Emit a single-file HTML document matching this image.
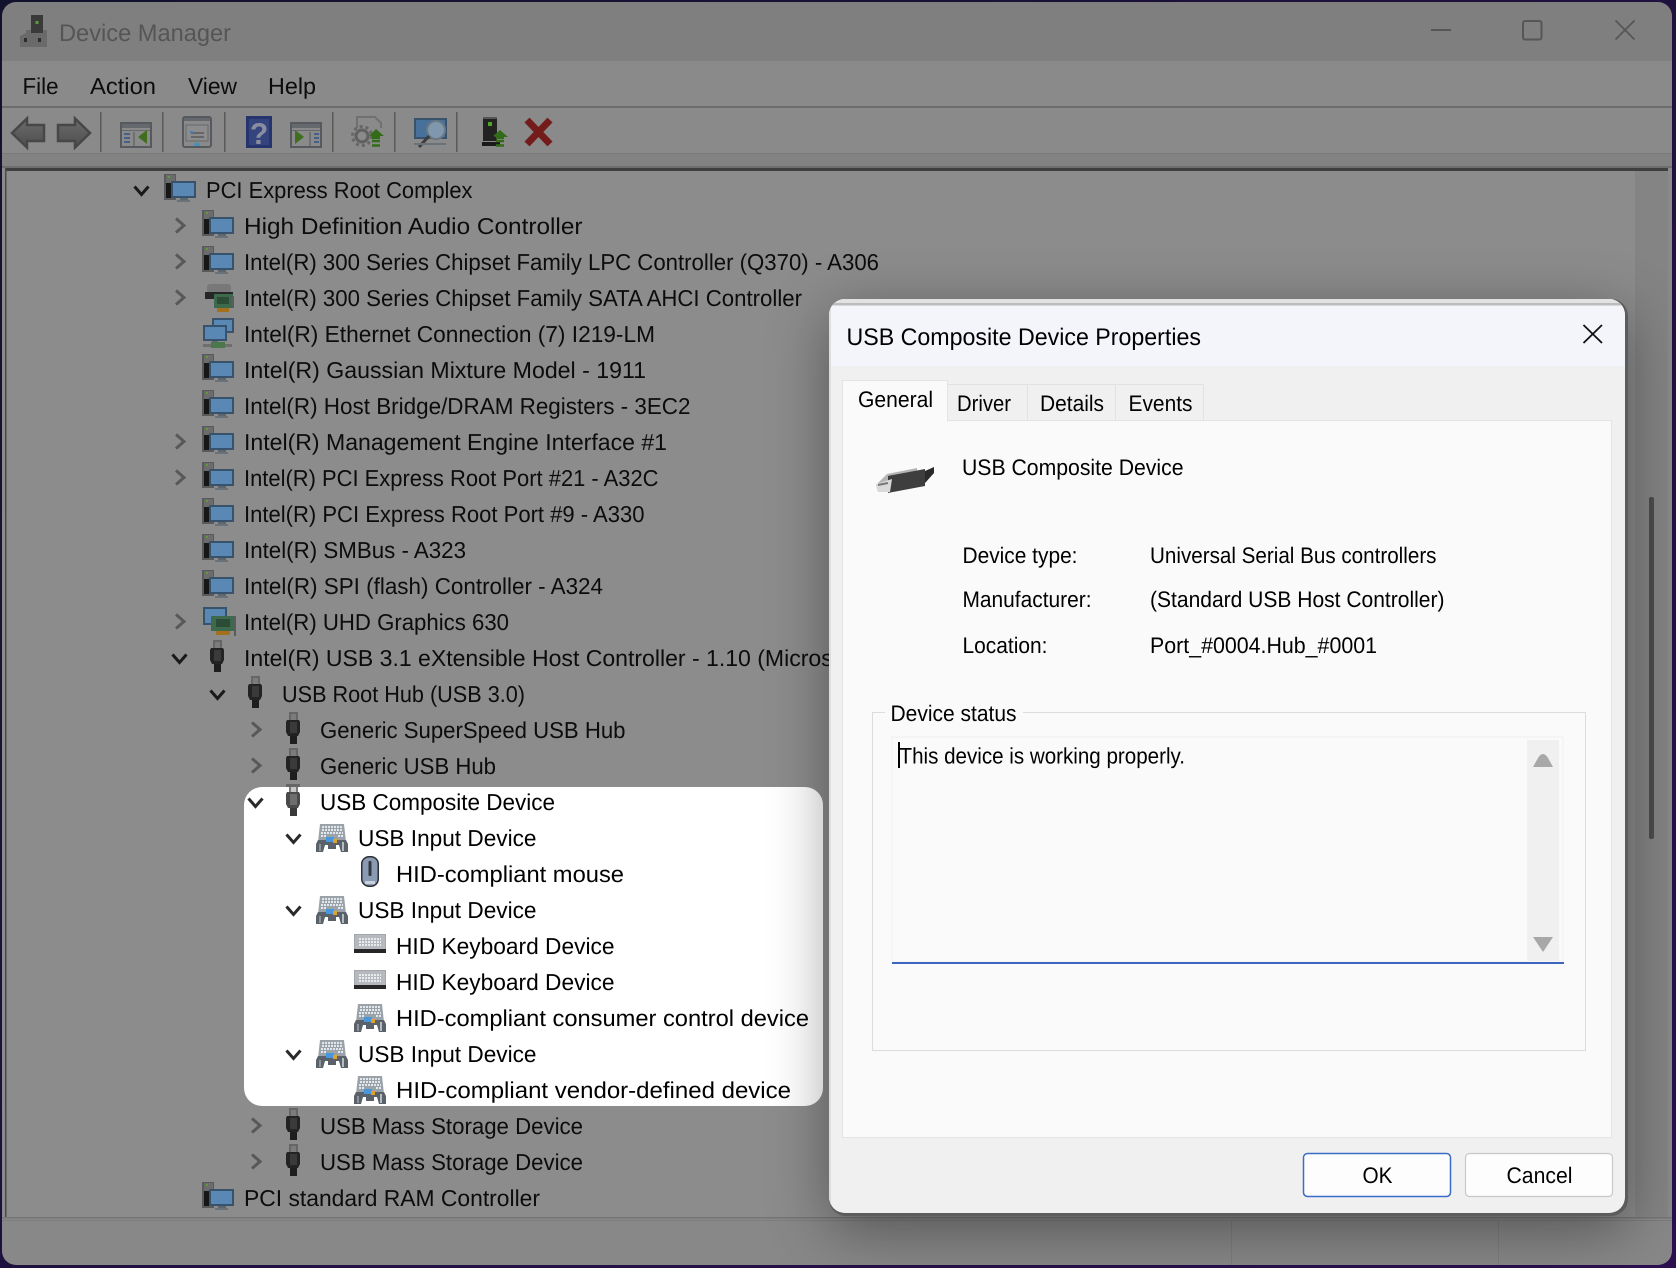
<!DOCTYPE html>
<html lang="en"><head><meta charset="utf-8"><title>Device Manager</title>
<style>
html,body{margin:0;padding:0;width:1676px;height:1268px;overflow:hidden;background:#141430}
svg{display:block}
text{font-family:"Liberation Sans",sans-serif;white-space:pre;text-rendering:geometricPrecision}
.t{font-size:23px;fill:#0c0c0c}
.k{font-size:23px;fill:#000}
.d{font-size:22.5px;fill:#000}
</style></head><body>
<svg xmlns="http://www.w3.org/2000/svg" width="1676" height="1268" viewBox="0 0 1676 1268">
<defs>
<linearGradient id="pg" x1="0" y1="0" x2="1" y2="1"><stop offset="0" stop-color="#12122c"/><stop offset="1" stop-color="#2c1050"/></linearGradient>
<linearGradient id="arr" x1="0" y1="0" x2="0" y2="1"><stop offset="0" stop-color="#6c6c6c"/><stop offset="1" stop-color="#4e4e4e"/></linearGradient>
<clipPath id="win"><rect x="2" y="2" width="1670" height="1263" rx="14"/></clipPath>
<clipPath id="dlg"><rect x="829" y="299" width="796" height="914" rx="16"/></clipPath>

<g id="pc">
<rect x="0" y="0" width="12" height="26" fill="#5a5a5a"/>
<rect x="2" y="1" width="9" height="8" fill="#6c6c6c"/>
<rect x="2" y="9" width="7" height="15" fill="#171717"/>
<rect x="4" y="2" width="2" height="2" fill="#5c9a3c"/>
<rect x="7" y="7" width="25" height="17" fill="#38526c"/>
<rect x="9" y="9" width="21" height="13" fill="#5a88b4"/>
<rect x="16" y="24" width="8" height="2" fill="#5a6670"/>
<rect x="13" y="26" width="13" height="2" fill="#6a7278"/>
</g>
<g id="sata">
<rect x="3" y="0" width="24" height="9" rx="3" fill="#787878"/>
<rect x="1" y="8" width="28" height="7" fill="#262626"/>
<rect x="10" y="10" width="19" height="14" fill="#3d6a4c"/>
<rect x="13" y="13" width="12" height="7" fill="#2c4c38"/>
<rect x="13" y="24" width="12" height="4" fill="#a5701e"/>
<rect x="28" y="12" width="2" height="12" fill="#5c5c5c"/>
</g>
<g id="net">
<rect x="9" y="0" width="22" height="15" fill="#38526c"/><rect x="11" y="2" width="18" height="11" fill="#5a88b4"/>
<rect x="0" y="7" width="24" height="16" fill="#38526c"/><rect x="2" y="9" width="20" height="12" fill="#5a88b4"/>
<rect x="9" y="23" width="6" height="3" fill="#5a6670"/>
<rect x="0" y="26" width="29" height="3" fill="#6e6e6e"/>
<rect x="8" y="24" width="14" height="6" fill="#4a784a"/>
</g>
<g id="gfx">
<rect x="0" y="0" width="24" height="18" fill="#38526c"/><rect x="2" y="2" width="20" height="14" fill="#5a88b4"/>
<rect x="8" y="9" width="25" height="15" fill="#3d6a4c"/><rect x="13" y="12" width="14" height="8" fill="#2c4c38"/>
<rect x="13" y="24" width="14" height="4" fill="#a5701e"/>
<rect x="31" y="9" width="2" height="20" fill="#5c5c5c"/>
</g>
<g id="usb">
<rect x="3" y="0" width="9" height="11" fill="#666"/><rect x="5" y="2" width="5" height="7" fill="#7c7c7c"/>
<path d="M1 8H13L14 10V20L12 24H2L0 20V10Z" fill="#232323"/>
<rect x="4" y="10" width="7" height="11" fill="#3a3a3a"/>
<rect x="4" y="24" width="7" height="8" fill="#1e1e1e"/>
</g>
<g id="usbl">
<rect x="3" y="0" width="9" height="11" fill="#7a7a7a"/><rect x="5" y="2" width="5" height="7" fill="#c8c8c8"/>
<path d="M1 8H13L14 10V20L12 24H2L0 20V10Z" fill="#4a4a4a"/>
<rect x="4" y="10" width="7" height="11" fill="#6e6e6e"/>
<rect x="4" y="24" width="7" height="8" fill="#3a3a3a"/>
</g>
<g id="inp">
<path d="M4 0H28L30 18H2Z" fill="#9aa2aa"/>
<path d="M6 3H26M6 6H27M5 9H27M5 12H10M22 12H27" stroke="#e4e8ec" stroke-width="2" stroke-dasharray="2 1" fill="none"/>
<path d="M2 16H30L32 20V28H25L23 21H20V25H12V21H9L7 28H0V20Z" fill="#5b6168"/>
<rect x="10" y="13" width="8" height="5" fill="#4a96dc"/>
<rect x="17" y="15" width="4" height="4" fill="#e0a030"/>
<rect x="26" y="18" width="2" height="9" fill="#b4bcc4"/>
<rect x="3" y="20" width="2" height="7" fill="#8d959c"/>
</g>
<g id="kb">
<rect x="0" y="0" width="32" height="17" fill="#a3a7ab"/>
<rect x="1" y="1" width="30" height="15" fill="#b6babe"/>
<path d="M5 5H27M5 8H27M5 11H27" stroke="#e8eaec" stroke-width="2" stroke-dasharray="2 1" fill="none"/>
<rect x="0" y="15" width="32" height="4" fill="#262626"/>
</g>
<g id="mouse">
<rect x="1" y="0" width="18" height="31" rx="8" fill="#2a2d33"/>
<rect x="2.500" y="1.500" width="15" height="28" rx="6.500" fill="#8a9ab3"/>
<rect x="8.500" y="5" width="3" height="15" rx="1" fill="#33383f"/>
<rect x="5" y="25" width="10" height="3" fill="#c8d0dc"/>
</g>
<path id="cc" d="M-4 -7L4 0L-4 7" fill="none" stroke="#585858" stroke-width="3"/>
<path id="ce" d="M-7 -4L0 4L7 -4" fill="none" stroke="#191919" stroke-width="3"/>
<path id="cel" d="M-7 -4L0 4L7 -4" fill="none" stroke="#2a2a2a" stroke-width="3"/>
<g id="pane">
<rect x="1" y="1" width="30" height="24" fill="#8a8a8a" stroke="#56595e" stroke-width="2"/>
<rect x="2" y="2" width="28" height="4" fill="#65686c"/>
<rect x="2" y="8" width="28" height="1" fill="#65686c"/>
</g>
</defs>

<rect width="1676" height="1268" fill="url(#pg)"/>
<g clip-path="url(#win)">
<rect x="0" y="0" width="1676" height="62" fill="#7f7f7f"/>
<rect x="0" y="61" width="1676" height="46" fill="#8a8a8a"/>
<rect x="0" y="106" width="1676" height="2" fill="#6d6d6d"/>
<rect x="0" y="108" width="1676" height="45" fill="#8a8a8a"/>
<rect x="0" y="153" width="1676" height="14" fill="#828282"/>
<rect x="0" y="153" width="1676" height="1" fill="#797979"/>
<rect x="0" y="166" width="1676" height="2" fill="#6e6e6e"/>
<rect x="0" y="168" width="1676" height="1060" fill="#8a8a8a"/>
<rect x="5" y="168" width="1663" height="3" fill="#3e3e3e"/>
<rect x="5" y="168" width="1.500" height="1049" fill="#4a4a4a"/>
<rect x="6.500" y="171" width="1661.500" height="1046" fill="#8c8c8c"/>
<rect x="1635" y="171" width="33" height="1046" fill="#848484"/>
<rect x="1649" y="497" width="5" height="342" rx="2" fill="#4c4c4c"/>
<rect x="0" y="1217" width="1676" height="1.500" fill="#757575"/>
<rect x="0" y="1220" width="1676" height="1" fill="#7b7b7b"/>
<rect x="0" y="1221" width="1676" height="45" fill="#888"/>
<rect x="1231" y="1221" width="1" height="45" fill="#7d7d7d"/>
<rect x="1498" y="1221" width="1" height="45" fill="#7d7d7d"/>
</g>

<!-- title bar -->
<rect x="31" y="15" width="12" height="19" fill="#3a3a3a"/><rect x="35.500" y="21" width="3" height="3" fill="#5c9a3c"/>
<path d="M26 30H31V33H43V30H47V47H20V36L26 33Z" fill="#6a6a6a"/><rect x="24" y="38" width="3" height="4" fill="#2c2c2c"/><rect x="38" y="38" width="3" height="4" fill="#2c2c2c"/>
<text x="59" y="41" font-size="24" fill="#555" textLength="172" lengthAdjust="spacingAndGlyphs">Device Manager</text>
<path d="M1431 30H1451" stroke="#565656" stroke-width="2"/>
<rect x="1523" y="21" width="18.500" height="18.500" rx="2" fill="none" stroke="#565656" stroke-width="2"/>
<path d="M1615.500 20.500L1634.500 39.500M1634.500 20.500L1615.500 39.500" stroke="#565656" stroke-width="1.800"/>

<!-- menu -->
<text class="t" x="22.500" y="94" textLength="36" lengthAdjust="spacingAndGlyphs">File</text>
<text class="t" x="90" y="94" textLength="66" lengthAdjust="spacingAndGlyphs">Action</text>
<text class="t" x="188" y="94" textLength="49" lengthAdjust="spacingAndGlyphs">View</text>
<text class="t" x="268" y="94" textLength="48" lengthAdjust="spacingAndGlyphs">Help</text>

<!-- toolbar -->
<path d="M12 133L27 118.500V125H44V141H27V147.500Z" fill="url(#arr)" stroke="#474747" stroke-width="2.500"/>
<path d="M90 133L75 118.500V125H58V141H75V147.500Z" fill="url(#arr)" stroke="#474747" stroke-width="2.500"/>
<g fill="#5a5a5a"><rect x="100" y="112" width="1.500" height="40"/><rect x="162" y="112" width="1.500" height="40"/><rect x="224" y="112" width="1.500" height="40"/><rect x="332" y="112" width="1.500" height="40"/><rect x="394" y="112" width="1.500" height="40"/><rect x="456" y="112" width="1.500" height="40"/></g>
<use href="#pane" x="120" y="122"/>
<path d="M134 132V146" stroke="#65686c" stroke-width="1.500"/>
<path d="M124 134H130M124 138H130M124 142H130" stroke="#465f88" stroke-width="2"/>
<path d="M147 130V144L138 137Z" fill="#3f6f1e"/>
<rect x="183" y="117" width="28" height="30" rx="2" fill="#8a8a8a" stroke="#56595e" stroke-width="2"/>
<rect x="184" y="118" width="26" height="3" fill="#65686c"/>
<rect x="186" y="125" width="22" height="16" fill="#8c8c8c" stroke="#65686c"/>
<path d="M191 133H204M191 137H204" stroke="#565a5f" stroke-width="1.500"/><rect x="190" y="131" width="3" height="2" fill="#4a7fb0"/>
<rect x="194" y="143" width="6" height="3" fill="#4a8fb8"/>
<rect x="246" y="116" width="26" height="32" fill="#26336c"/>
<rect x="249" y="119" width="20" height="26" fill="#34447f"/>
<text x="259" y="144" font-size="30" font-weight="bold" fill="#8a8e9e" text-anchor="middle">?</text>
<use href="#pane" x="290" y="122"/>
<path d="M310 132V146" stroke="#65686c" stroke-width="1.500"/>
<path d="M314 134H319M314 138H319M314 142H319" stroke="#465f88" stroke-width="2"/>
<path d="M295 130V144L304 137Z" fill="#3f6f1e"/>
<path d="M357 128V117H375L381 123V128" fill="none" stroke="#707070" stroke-width="2"/>
<circle cx="362" cy="136" r="6" fill="none" stroke="#606060" stroke-width="3"/><circle cx="362" cy="136" r="9.500" fill="none" stroke="#666" stroke-width="3" stroke-dasharray="3 3"/>
<path d="M369 136L376 129L384 136H380V139H372V136Z" fill="#336c18"/><path d="M372 141H380M372 145.500H380" stroke="#336c18" stroke-width="2.500"/>
<rect x="415" y="119" width="31" height="19" fill="#47719a" stroke="#38526c" stroke-width="2"/>
<circle cx="436" cy="130" r="9" fill="#8098ae" stroke="#6a7884" stroke-width="2"/>
<path d="M429 136L419 147" stroke="#3c3c3c" stroke-width="3"/>
<rect x="414" y="143" width="32" height="2" fill="#6a7278"/>
<rect x="483" y="117" width="14" height="24" fill="#222"/><rect x="483" y="117" width="14" height="2" fill="#555"/>
<rect x="488" y="122" width="4" height="4" fill="#55a028"/><rect x="482" y="142" width="18" height="4" fill="#1a1a1a"/>
<path d="M493 136L500 130L508 137H504V139H496V137Z" fill="#336c18"/><path d="M496 141H504M496 145.500H504" stroke="#336c18" stroke-width="2.500"/>
<path d="M527 120L550 144M550 120L527 144" stroke="#741c1c" stroke-width="7"/>

<!-- tree: highlight -->
<rect x="244" y="787" width="579" height="319" rx="18" fill="#fff"/>

<!-- chevrons -->
<use href="#ce" x="141.500" y="190.500"/>
<use href="#cc" x="180" y="225.500"/><use href="#cc" x="180" y="261.500"/><use href="#cc" x="180" y="297.500"/>
<use href="#cc" x="180" y="441.500"/><use href="#cc" x="180" y="477.500"/><use href="#cc" x="180" y="621.500"/>
<use href="#ce" x="179.500" y="658.500"/><use href="#ce" x="217.500" y="694.500"/>
<use href="#cc" x="256" y="729.500"/><use href="#cc" x="256" y="765.500"/>
<use href="#cel" x="255.500" y="802.500"/><use href="#cel" x="293.500" y="838.500"/><use href="#cel" x="293.500" y="910.500"/><use href="#cel" x="293.500" y="1054.500"/>
<use href="#cc" x="256" y="1125.500"/><use href="#cc" x="256" y="1161.500"/>

<!-- icons -->
<use href="#pc" x="164" y="174"/><use href="#pc" x="202" y="210"/><use href="#pc" x="202" y="246"/>
<use href="#sata" x="204" y="284"/><use href="#net" x="203" y="318"/>
<use href="#pc" x="202" y="354"/><use href="#pc" x="202" y="390"/><use href="#pc" x="202" y="426"/><use href="#pc" x="202" y="462"/><use href="#pc" x="202" y="498"/><use href="#pc" x="202" y="534"/><use href="#pc" x="202" y="570"/>
<use href="#gfx" x="203" y="607"/>
<use href="#usb" x="210" y="640"/><use href="#usb" x="248" y="676"/><use href="#usb" x="286" y="712"/><use href="#usb" x="286" y="748"/>
<use href="#usbl" x="286" y="784"/>
<rect x="286" y="784" width="14" height="3" fill="#666"/>
<use href="#inp" x="316" y="824"/><use href="#mouse" x="360" y="856"/><use href="#inp" x="316" y="896"/>
<use href="#kb" x="354" y="934"/><use href="#kb" x="354" y="970"/><use href="#inp" x="354" y="1004"/><use href="#inp" x="316" y="1040"/><use href="#inp" x="354" y="1076"/>
<use href="#usb" x="286" y="1108"/><use href="#usb" x="286" y="1144"/><use href="#pc" x="202" y="1182"/>

<!-- tree text -->
<text class="t" x="206" y="197.800" textLength="266.500" lengthAdjust="spacingAndGlyphs">PCI Express Root Complex</text>
<text class="t" x="244" y="233.800" textLength="338.500" lengthAdjust="spacingAndGlyphs">High Definition Audio Controller</text>
<text class="t" x="244" y="269.800" textLength="635" lengthAdjust="spacingAndGlyphs">Intel(R) 300 Series Chipset Family LPC Controller (Q370) - A306</text>
<text class="t" x="244" y="305.800" textLength="558" lengthAdjust="spacingAndGlyphs">Intel(R) 300 Series Chipset Family SATA AHCI Controller</text>
<text class="t" x="244" y="341.800" textLength="411" lengthAdjust="spacingAndGlyphs">Intel(R) Ethernet Connection (7) I219-LM</text>
<text class="t" x="244" y="377.800" textLength="402" lengthAdjust="spacingAndGlyphs">Intel(R) Gaussian Mixture Model - 1911</text>
<text class="t" x="244" y="413.800" textLength="446.500" lengthAdjust="spacingAndGlyphs">Intel(R) Host Bridge/DRAM Registers - 3EC2</text>
<text class="t" x="244" y="449.800" textLength="423" lengthAdjust="spacingAndGlyphs">Intel(R) Management Engine Interface #1</text>
<text class="t" x="244" y="485.800" textLength="414.500" lengthAdjust="spacingAndGlyphs">Intel(R) PCI Express Root Port #21 - A32C</text>
<text class="t" x="244" y="521.800" textLength="400.500" lengthAdjust="spacingAndGlyphs">Intel(R) PCI Express Root Port #9 - A330</text>
<text class="t" x="244" y="557.800" textLength="222" lengthAdjust="spacingAndGlyphs">Intel(R) SMBus - A323</text>
<text class="t" x="244" y="593.800" textLength="359" lengthAdjust="spacingAndGlyphs">Intel(R) SPI (flash) Controller - A324</text>
<text class="t" x="244" y="629.800" textLength="265" lengthAdjust="spacingAndGlyphs">Intel(R) UHD Graphics 630</text>
<text class="t" x="244" y="665.800" textLength="622" lengthAdjust="spacingAndGlyphs">Intel(R) USB 3.1 eXtensible Host Controller - 1.10 (Microsoft)</text>
<text class="t" x="282" y="701.800" textLength="243" lengthAdjust="spacingAndGlyphs">USB Root Hub (USB 3.0)</text>
<text class="t" x="320" y="737.800" textLength="305.500" lengthAdjust="spacingAndGlyphs">Generic SuperSpeed USB Hub</text>
<text class="t" x="320" y="773.800" textLength="176" lengthAdjust="spacingAndGlyphs">Generic USB Hub</text>
<text class="k" x="320" y="809.800" textLength="235" lengthAdjust="spacingAndGlyphs">USB Composite Device</text>
<text class="k" x="358" y="845.800" textLength="178.500" lengthAdjust="spacingAndGlyphs">USB Input Device</text>
<text class="k" x="396" y="881.800" textLength="228" lengthAdjust="spacingAndGlyphs">HID-compliant mouse</text>
<text class="k" x="358" y="917.800" textLength="178.500" lengthAdjust="spacingAndGlyphs">USB Input Device</text>
<text class="k" x="396" y="953.800" textLength="218.500" lengthAdjust="spacingAndGlyphs">HID Keyboard Device</text>
<text class="k" x="396" y="989.800" textLength="218.500" lengthAdjust="spacingAndGlyphs">HID Keyboard Device</text>
<text class="k" x="396" y="1025.800" textLength="413" lengthAdjust="spacingAndGlyphs">HID-compliant consumer control device</text>
<text class="k" x="358" y="1061.800" textLength="178.500" lengthAdjust="spacingAndGlyphs">USB Input Device</text>
<text class="k" x="396" y="1097.800" textLength="395" lengthAdjust="spacingAndGlyphs">HID-compliant vendor-defined device</text>
<text class="t" x="320" y="1133.800" textLength="263" lengthAdjust="spacingAndGlyphs">USB Mass Storage Device</text>
<text class="t" x="320" y="1169.800" textLength="263" lengthAdjust="spacingAndGlyphs">USB Mass Storage Device</text>
<text class="t" x="244" y="1205.800" textLength="296" lengthAdjust="spacingAndGlyphs">PCI standard RAM Controller</text>

<!-- dialog -->
<rect x="829" y="299" width="799" height="917" rx="17" fill="#5c5c5c" style="filter:drop-shadow(0 14px 30px rgba(0,0,0,.38))"/>
<g clip-path="url(#dlg)">
<rect x="829" y="299" width="797" height="914" fill="#f0f0f0"/>
<rect x="829" y="299" width="797" height="67" fill="#f4f4fb"/>
<rect x="829" y="299" width="797" height="4" fill="#e2e2e2"/>
<rect x="829" y="303" width="797" height="2.500" fill="#bcbcbc"/>
<rect x="829" y="303" width="2" height="910" fill="#dedede"/>
</g>
<text x="846.500" y="345" font-size="24" fill="#000" textLength="354.500" lengthAdjust="spacingAndGlyphs">USB Composite Device Properties</text>
<path d="M1583.500 325L1602 343M1602 325L1583.500 343" stroke="#111" stroke-width="1.800"/>

<rect x="842.500" y="420.500" width="769" height="717" fill="#fafafa" stroke="#e4e4e4"/>
<rect x="947.500" y="384.500" width="80" height="36" fill="#f0f0f0" stroke="#e2e2e2"/>
<rect x="1027.500" y="384.500" width="88" height="36" fill="#f0f0f0" stroke="#e2e2e2"/>
<rect x="1115.500" y="384.500" width="88" height="36" fill="#f0f0f0" stroke="#e2e2e2"/>
<path d="M842.500 422V380.500H947.500V422" fill="#fafafa" stroke="#e4e4e4"/>
<rect x="843" y="415" width="104" height="8" fill="#fafafa"/>
<text class="d" x="858" y="407" textLength="75" lengthAdjust="spacingAndGlyphs">General</text>
<text class="d" x="957" y="411" textLength="54" lengthAdjust="spacingAndGlyphs">Driver</text>
<text class="d" x="1040" y="411" textLength="64" lengthAdjust="spacingAndGlyphs">Details</text>
<text class="d" x="1128.500" y="411" textLength="64" lengthAdjust="spacingAndGlyphs">Events</text>

<path d="M876 485L887 474L917 468V486L889 492L878 492Z" fill="#b4b4b4"/>
<path d="M888 476L925 469V486L888 493Z" fill="#3e3e3e"/>
<path d="M925 471L934 467V473L925 483Z" fill="#2a2a2a"/>
<path d="M876 484L892 479L890 492L878 492Z" fill="#dadada"/>
<path d="M878 485L888 483" stroke="#777" stroke-width="2"/>
<text class="d" x="962" y="475" textLength="221.500" lengthAdjust="spacingAndGlyphs">USB Composite Device</text>

<text class="d" x="962.500" y="563" textLength="115" lengthAdjust="spacingAndGlyphs">Device type:</text>
<text class="d" x="962.500" y="607" textLength="129" lengthAdjust="spacingAndGlyphs">Manufacturer:</text>
<text class="d" x="962.500" y="653" textLength="85" lengthAdjust="spacingAndGlyphs">Location:</text>
<text class="d" x="1150" y="563" textLength="286.500" lengthAdjust="spacingAndGlyphs">Universal Serial Bus controllers</text>
<text class="d" x="1150" y="607" textLength="294.500" lengthAdjust="spacingAndGlyphs">(Standard USB Host Controller)</text>
<text class="d" x="1150" y="653" textLength="227" lengthAdjust="spacingAndGlyphs">Port_#0004.Hub_#0001</text>

<rect x="872.500" y="712.500" width="713" height="338" fill="none" stroke="#dcdcdc"/>
<rect x="885" y="705" width="138" height="16" fill="#fafafa"/>
<text class="d" x="890.500" y="721" textLength="126" lengthAdjust="spacingAndGlyphs">Device status</text>
<rect x="892" y="737" width="671" height="225" fill="#fafafa" stroke="#f0f0f0"/>
<rect x="1527" y="740" width="32" height="221" fill="#f0f0f0"/>
<rect x="892" y="962" width="672" height="2" fill="#3a66c0"/>
<rect x="898" y="742" width="2" height="26" fill="#000"/>
<text class="d" x="899.500" y="763.500" textLength="285.500" lengthAdjust="spacingAndGlyphs">This device is working properly.</text>
<path d="M1533 767L1538 758Q1543 750 1548 758L1553 767Z" fill="#a8a8a8"/>
<path d="M1533 937H1553L1543 952Z" fill="#a8a8a8"/>

<rect x="1303.500" y="1153.500" width="147" height="43" rx="4" fill="#fdfdfd" stroke="#3a6cc8" stroke-width="1.500"/>
<rect x="1465.500" y="1153.500" width="147" height="43" rx="4" fill="#fdfdfd" stroke="#c8c8c8" stroke-width="1.200"/>
<text class="d" x="1362.500" y="1183" textLength="30" lengthAdjust="spacingAndGlyphs">OK</text>
<text class="d" x="1506.500" y="1183" textLength="66" lengthAdjust="spacingAndGlyphs">Cancel</text>
</svg>
</body></html>
